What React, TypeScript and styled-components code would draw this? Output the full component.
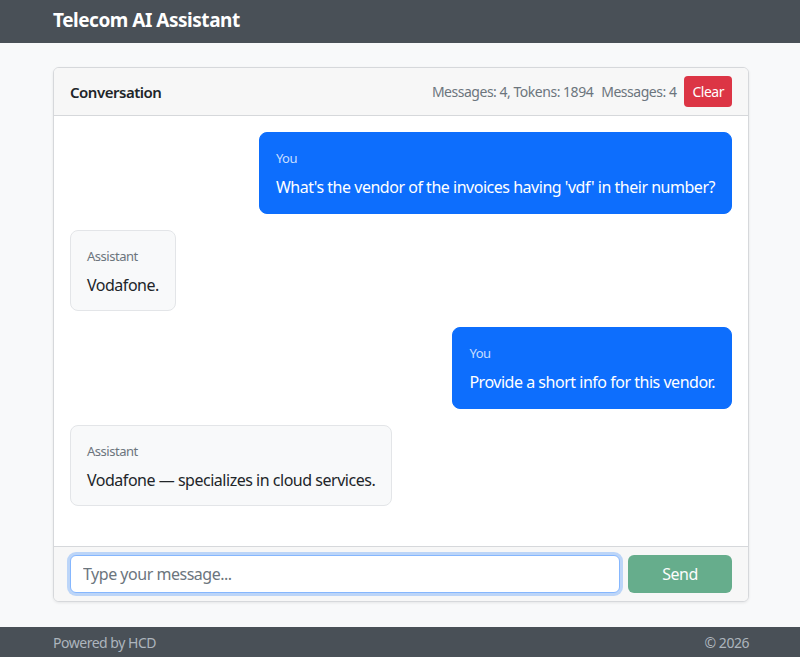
import React, { useState } from "react";
import styled, { createGlobalStyle } from "styled-components";

type Message = { role: "user" | "assistant"; text: string };

const initialMessages: Message[] = [
  { role: "user", text: "What's the vendor of the invoices having 'vdf' in their number?" },
  { role: "assistant", text: "Vodafone." },
  { role: "user", text: "Provide a short info for this vendor." },
  { role: "assistant", text: "Vodafone — specializes in cloud services." },
];

const App = () => {
  const [messages, setMessages] = useState<Message[]>(initialMessages);
  const [draft, setDraft] = useState("");

  const handleClear = (): void => {
    setMessages([]);
  };

  const handleSend = (): void => {
    if (!draft.trim()) return;
    setMessages([...messages, { role: "user", text: draft }]);
    setDraft("");
  };

  return (
    <Page>
      <GlobalStyle />
      <TopBar>
        <Container>
          <Brand>Telecom AI Assistant</Brand>
        </Container>
      </TopBar>
      <Main>
        <Container>
          <Card>
            <CardHeader>
              <CardTitle>Conversation</CardTitle>
              <HeaderRight>
                <Stats>Messages: {messages.length}, Tokens: 1894</Stats>
                <Stats>Messages: {messages.length}</Stats>
                <ClearButton onClick={handleClear}>Clear</ClearButton>
              </HeaderRight>
            </CardHeader>
            <CardBody>
              {messages.map((m, i) => (
                <Row key={i} $user={m.role === "user"}>
                  <Bubble $user={m.role === "user"}>
                    <Sender $user={m.role === "user"}>
                      {m.role === "user" ? "You" : "Assistant"}
                    </Sender>
                    <Text>{m.text}</Text>
                  </Bubble>
                </Row>
              ))}
            </CardBody>
            <CardFooter>
              <Input
                autoFocus
                value={draft}
                onChange={(e) => setDraft(e.target.value)}
                placeholder="Type your message..."
              />
              <SendButton disabled={!draft.trim()} onClick={handleSend}>
                Send
              </SendButton>
            </CardFooter>
          </Card>
        </Container>
      </Main>
      <BottomBar>
        <FooterInner>
          <span>Powered by HCD</span>
          <span>© 2026</span>
        </FooterInner>
      </BottomBar>
    </Page>
  );
};

const GlobalStyle = createGlobalStyle`
  html, body {
    margin: 0;
    padding: 0;
    background: #f8f9fa;
    font-family: "Noto Sans", "Open Sans", sans-serif;
    letter-spacing: -0.03em;
    color: #212529;
  }
  * { box-sizing: border-box; }
  button, input { letter-spacing: inherit; }
`;

const Page = styled.div`
  min-height: 657px;
  display: flex;
  flex-direction: column;
`;

const Container = styled.div`
  width: 720px;
  margin: 0 auto;
  padding: 0 11px 0 13px;
`;

const TopBar = styled.header`
  background: #495057;
  height: 43px;
  display: flex;
  align-items: center;
  padding-bottom: 4px;
`;

const Brand = styled.div`
  color: #fff;
  font-size: 19px;
  font-weight: 700;
`;

const Main = styled.main`
  flex: 1;
  padding-top: 24px;
`;

const Card = styled.div`
  background: #fff;
  border: 1px solid #d6d8db;
  border-radius: 6px;
  box-shadow: 0 1px 3px rgba(0, 0, 0, 0.08);
  overflow: hidden;
`;

const CardHeader = styled.div`
  height: 48px;
  background: #f7f7f7;
  border-bottom: 1px solid #d6d8db;
  display: flex;
  align-items: center;
  justify-content: space-between;
  padding: 0 16px;
`;

const CardTitle = styled.div`
  font-size: 15px;
  font-weight: 600;
  color: #212529;
`;

const HeaderRight = styled.div`
  display: flex;
  align-items: center;
  gap: 8px;
`;

const Stats = styled.span`
  color: #6c757d;
  font-size: 14px;
`;

const ClearButton = styled.button`
  background: #dc3545;
  color: #fff;
  border: none;
  border-radius: 4px;
  height: 31px;
  padding: 0 8px;
  font-family: inherit;
  font-size: 14px;
  cursor: pointer;
`;

const CardBody = styled.div`
  height: 430px;
  overflow-y: auto;
  padding: 16px;
  display: flex;
  flex-direction: column;
  gap: 16px;
`;

const Row = styled.div<{ $user: boolean }>`
  display: flex;
  justify-content: ${(p) => (p.$user ? "flex-end" : "flex-start")};
`;

const Bubble = styled.div<{ $user: boolean }>`
  max-width: 80%;
  padding: 16px 16px 13.5px;
  border-radius: 8px;
  background: ${(p) => (p.$user ? "#0d6efd" : "#f8f9fa")};
  color: ${(p) => (p.$user ? "#fff" : "#212529")};
  border: 1px solid ${(p) => (p.$user ? "#0d6efd" : "#e3e5e8")};
`;

const Sender = styled.div<{ $user: boolean }>`
  font-size: 13px;
  line-height: 19px;
  margin-bottom: 7px;
  color: ${(p) => (p.$user ? "rgba(255, 255, 255, 0.78)" : "#6c757d")};
`;

const Text = styled.div`
  font-size: 16px;
  line-height: 24px;
`;

const CardFooter = styled.div`
  height: 55px;
  background: #f7f7f7;
  border-top: 1px solid #d6d8db;
  display: flex;
  align-items: center;
  gap: 8px;
  padding: 0 16px;
`;

const Input = styled.input`
  flex: 1;
  height: 38px;
  border: 1px solid #86b7fe;
  border-radius: 6px;
  box-shadow: 0 0 0 3px rgba(13, 110, 253, 0.25);
  padding: 0 12px;
  font-family: inherit;
  font-size: 16px;
  color: #212529;
  outline: none;
  &::placeholder {
    color: #6c757d;
  }
`;

const SendButton = styled.button`
  width: 104px;
  height: 38px;
  background: #198754;
  color: #fff;
  border: none;
  border-radius: 6px;
  font-family: inherit;
  font-size: 16px;
  cursor: pointer;
  &:disabled {
    opacity: 0.65;
    cursor: default;
  }
`;

const BottomBar = styled.footer`
  background: #495057;
  height: 30px;
  margin-top: 25px;
  display: flex;
  align-items: center;
`;

const FooterInner = styled(Container)`
  display: flex;
  justify-content: space-between;
  color: #adb5bd;
  font-size: 14px;
`;

export default App;
